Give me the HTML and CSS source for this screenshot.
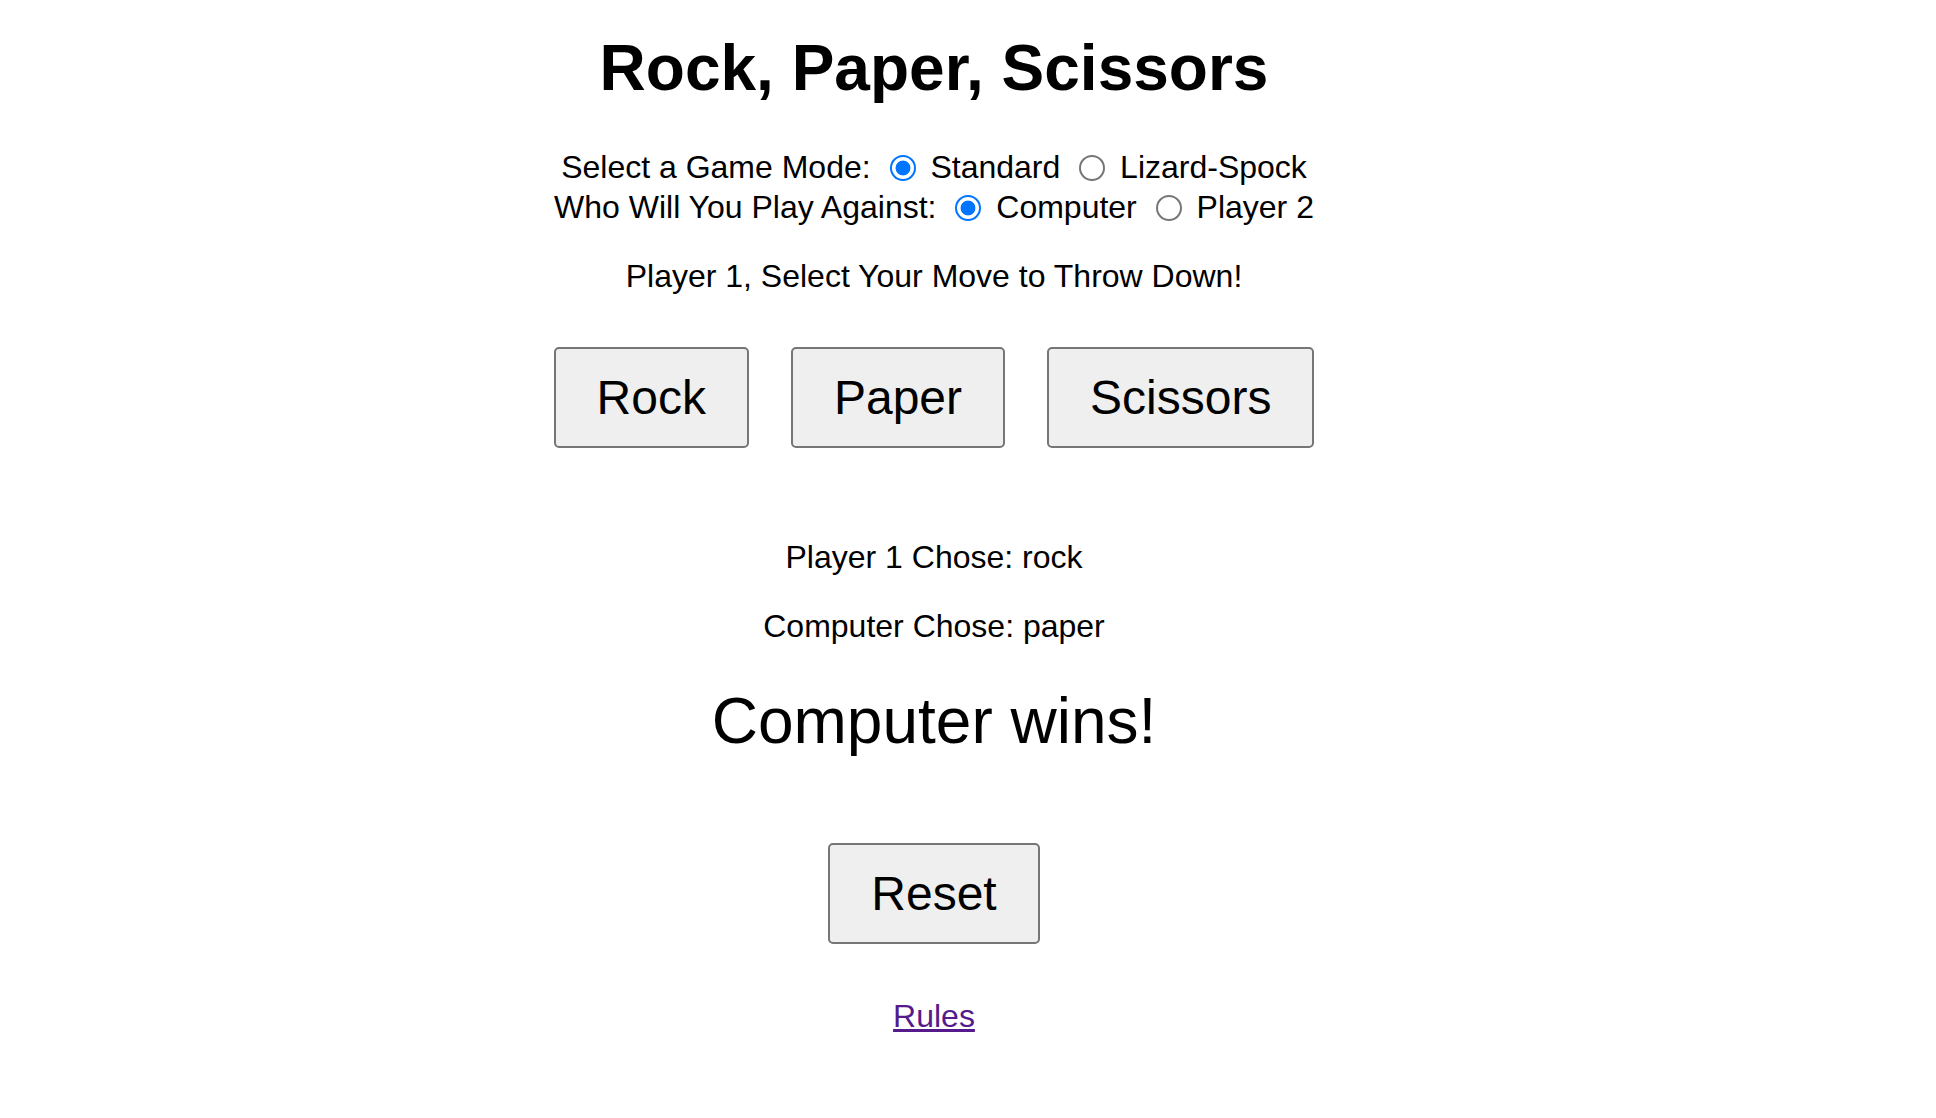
FILE: index.html
```html
<!DOCTYPE html>
<html lang="en">
<head>
<meta charset="utf-8">
<title>Rock, Paper, Scissors</title>
<link rel="stylesheet" href="styles.css">
</head>
<body>
<main class="page">
  <h1 class="title">Rock, Paper, Scissors</h1>
  <div class="options">
    <div class="option-row">Select a Game Mode: <input class="radio" type="radio" name="mode" checked> Standard <input class="radio" type="radio" name="mode"> Lizard-Spock</div>
    <div class="option-row">Who Will You Play Against: <input class="radio" type="radio" name="opp" checked> Computer <input class="radio" type="radio" name="opp"> Player 2</div>
  </div>
  <p class="prompt">Player 1, Select Your Move to Throw Down!</p>
  <div class="moves">
    <button class="btn">Rock</button>
    <button class="btn">Paper</button>
    <button class="btn">Scissors</button>
  </div>
  <p class="choice choice-first">Player 1 Chose: rock</p>
  <p class="choice choice-second">Computer Chose: paper</p>
  <div class="result">Computer wins!</div>
  <div class="reset-wrap"><button class="btn">Reset</button></div>
  <p class="rules"><a class="rules-link" href="#">Rules</a></p>
</main>
</body>
</html>
```
FILE: styles.css
```css
html, body {
  margin: 0;
  padding: 0;
  background: #ffffff;
}

body {
  font-family: "Liberation Sans", Arial, sans-serif;
  font-size: 32px;
  color: #000000;
}

.page {
  display: flex;
  flex-direction: column;
  align-items: stretch;
  text-align: center;
  padding-top: 31px;
  margin-right: 68px;
}

.title {
  margin: 0;
  font-size: 64px;
  font-weight: bold;
  line-height: normal;
}

.options {
  margin-top: 42.4px;
}

.option-row {
  line-height: 40px;
  height: 40px;
  white-space: nowrap;
}

.radio {
  -webkit-appearance: none;
  appearance: none;
  box-sizing: border-box;
  width: 26px;
  height: 26px;
  margin: 6px 6px 0 10px;
  border: 2px solid #767676;
  border-radius: 50%;
  background: #ffffff;
  vertical-align: -3px;
  padding: 0;
}

.radio:checked {
  border: 2.5px solid #0075ff;
  background: radial-gradient(circle, #0075ff 0, #0075ff 7px, #ffffff 7.8px);
}

.prompt {
  margin: 31px 0 0;
  line-height: normal;
}

.moves {
  margin-top: 52px;
  display: flex;
  justify-content: center;
  gap: 42px;
}

.btn {
  font-family: "Liberation Sans", Arial, sans-serif;
  font-size: 48px;
  line-height: normal;
  color: #000000;
  background: #efefef;
  border: 2px solid #767676;
  border-radius: 5px;
  padding: 21px 41px;
  margin: 0;
}

.choice {
  margin: 0;
  line-height: normal;
}

.choice-first {
  margin-top: 90.3px;
}

.choice-second {
  margin-top: 32px;
}

.result {
  margin-top: 39.4px;
  font-size: 64px;
  line-height: normal;
}

.reset-wrap {
  margin-top: 85.4px;
  display: flex;
  justify-content: center;
}

.rules {
  margin: 53.5px 0 0;
  line-height: normal;
}

.rules-link {
  color: #551a8b;
  text-decoration: underline;
}
```
